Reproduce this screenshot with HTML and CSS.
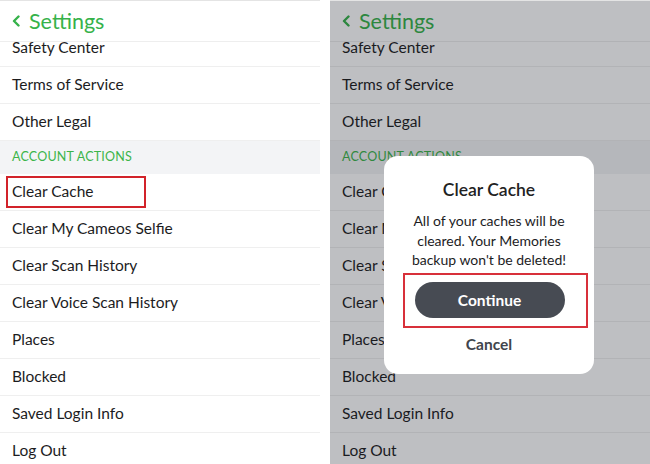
FILE: index.html
```html
<!DOCTYPE html>
<html lang="en">

<head>
    <meta charset="UTF-8">
    <meta name="viewport" content="width=device-width, initial-scale=1.0">
    <title>Clear Cache</title>
    <link rel="stylesheet" href="styles.css">
</head>

<body>
    <div class="screen">
        <div class="header">
            <svg class="back" width="8" height="12" viewBox="0 0 8 12"><path d="M6.5 1.5 2 6l4.5 4.5" /></svg>
            <span>Settings</span>
        </div>
        <div class="list">
            <div class="row">Safety Center</div>
            <div class="row">Terms of Service</div>
            <div class="row">Other Legal</div>
            <div class="section">ACCOUNT ACTIONS</div>
            <div class="row marked">Clear Cache<span class="mark"></span></div>
            <div class="row">Clear My Cameos Selfie</div>
            <div class="row">Clear Scan History</div>
            <div class="row">Clear Voice Scan History</div>
            <div class="row">Places</div>
            <div class="row">Blocked</div>
            <div class="row">Saved Login Info</div>
            <div class="row">Log Out</div>
        </div>
    </div>

    <div class="screen dimmed">
        <div class="header">
            <svg class="back" width="8" height="12" viewBox="0 0 8 12"><path d="M6.5 1.5 2 6l4.5 4.5" /></svg>
            <span>Settings</span>
        </div>
        <div class="list">
            <div class="row">Safety Center</div>
            <div class="row">Terms of Service</div>
            <div class="row">Other Legal</div>
            <div class="section">ACCOUNT ACTIONS</div>
            <div class="row">Clear Cache</div>
            <div class="row">Clear My Cameos Selfie</div>
            <div class="row">Clear Scan History</div>
            <div class="row">Clear Voice Scan History</div>
            <div class="row">Places</div>
            <div class="row">Blocked</div>
            <div class="row">Saved Login Info</div>
            <div class="row">Log Out</div>
        </div>
        <div class="shade"></div>
        <div class="dialog">
            <div class="title">Clear Cache</div>
            <p>All of your caches will be cleared. Your Memories backup won't be deleted!</p>
            <div class="confirm">
                <button class="continue">Continue</button>
            </div>
            <div class="cancel">Cancel</div>
        </div>
    </div>
</body>

</html>
```

FILE: styles.css
```css
html,
body {
    margin: 0;
    height: 100vh;
    background: white;
    overflow: hidden;
}

body {
    display: flex;
    gap: 10px;
    font-family: Lato, "Noto Sans", sans-serif;
    color: #1c1c1e;
}

.screen {
    position: relative;
    width: 320px;
    height: 464px;
    overflow: hidden;
    background: white;
    border-top: 1px solid #e4e4e4;
    box-sizing: border-box;
}

.screen.dimmed {
    flex: 1;
}

.header {
    position: relative;
    z-index: 1;
    height: 40px;
    display: flex;
    align-items: center;
    gap: 9px;
    padding-left: 12px;
    background: white;
    border-bottom: 1px solid #eeeeee;
    color: #36b24a;
    font-size: 21.5px;
}

.back {
    fill: none;
    stroke: #36b24a;
    stroke-width: 2.4;
    stroke-linecap: round;
    stroke-linejoin: round;
}

.list {
    margin-top: -12px;
}

.row {
    position: relative;
    height: 36px;
    line-height: 35px;
    padding-left: 12px;
    border-bottom: 1px solid #efefef;
    font-size: 15.5px;
}

.section {
    height: 33px;
    line-height: 32px;
    padding-left: 12px;
    background: #f3f4f6;
    color: #3cb54a;
    font-size: 12.5px;
    letter-spacing: 0.2px;
}

.mark {
    position: absolute;
    left: 6px;
    top: 2px;
    width: 140px;
    height: 32px;
    border: 2px solid #d2232a;
    box-sizing: border-box;
}

.shade {
    position: absolute;
    inset: 0;
    background: rgba(20, 25, 35, 0.28);
    z-index: 2;
}

.dialog {
    position: absolute;
    z-index: 3;
    left: 54px;
    top: 155px;
    width: 210px;
    height: 218px;
    background: white;
    border-radius: 14px;
    text-align: center;
}

.title {
    margin-top: 23px;
    font-size: 17.5px;
    font-weight: 600;
    color: #222;
}

.dialog p {
    margin: 11px 20px 0;
    font-size: 14px;
    line-height: 19.5px;
    color: #1c1c1e;
}

.confirm {
    margin: 3px 6px 0 19px;
    height: 55px;
    border: 2px solid #d8303a;
    display: flex;
    align-items: center;
    justify-content: center;
    box-sizing: border-box;
}

.continue {
    width: 150px;
    height: 36px;
    margin-left: -12px;
    border: none;
    border-radius: 18px;
    background: #474b53;
    color: white;
    font-family: inherit;
    font-size: 15.5px;
    font-weight: 700;
}

.cancel {
    margin-top: 7px;
    font-size: 15.5px;
    font-weight: 700;
    color: #40454c;
}
```
